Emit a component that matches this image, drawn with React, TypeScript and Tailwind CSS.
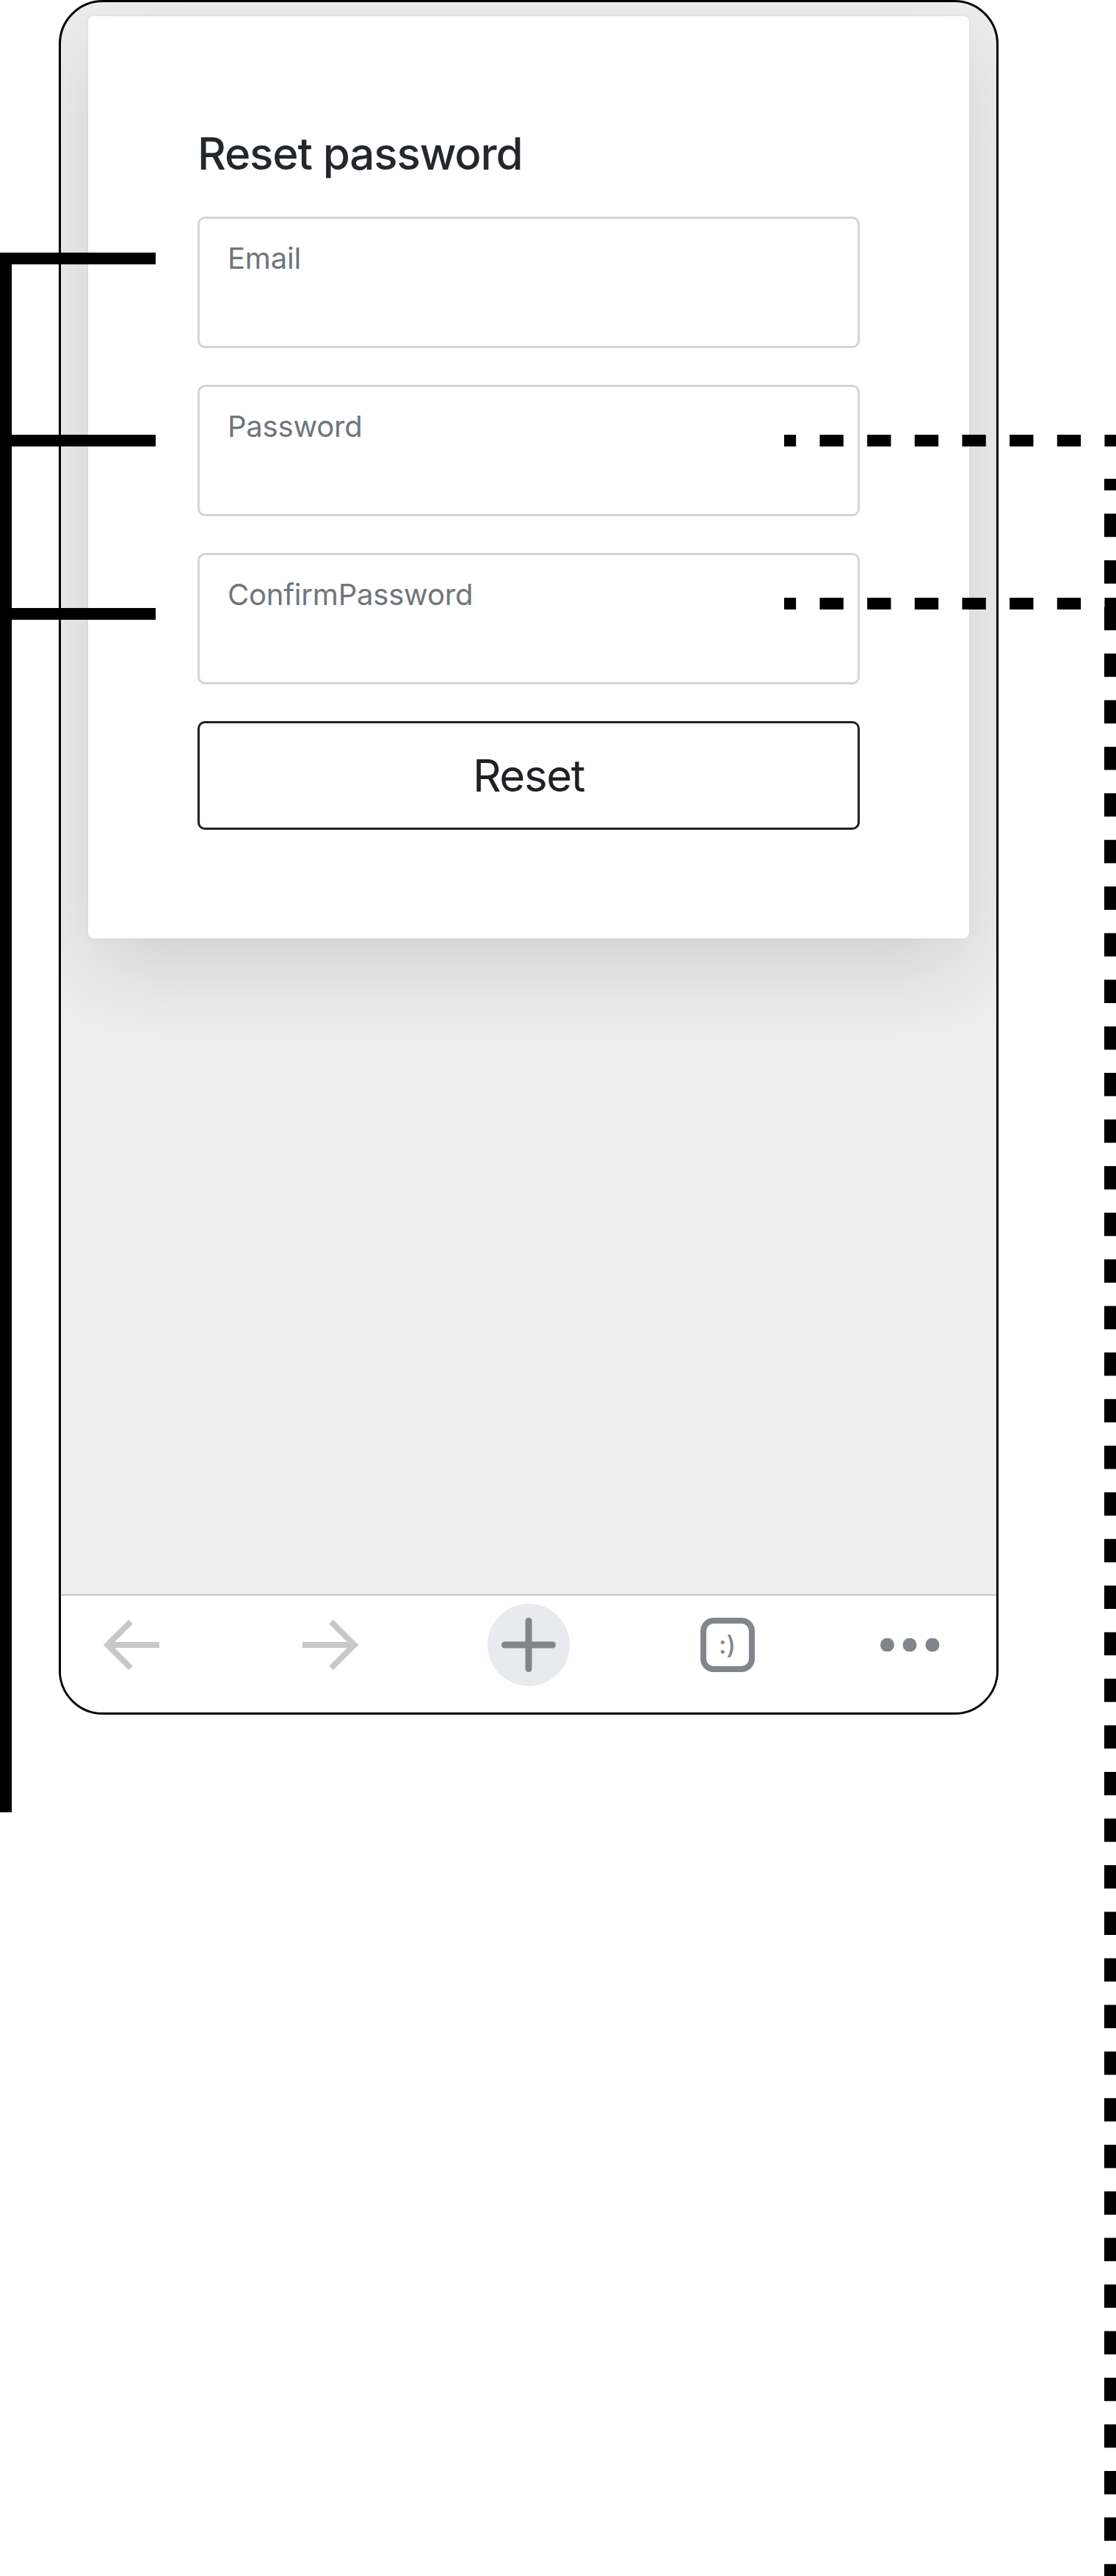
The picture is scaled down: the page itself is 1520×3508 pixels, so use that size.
import React from 'react';

const fields = ['Email', 'Password', 'ConfirmPassword'];

const ArrowIcon = ({ flip = false }: { flip?: boolean }) => (
  <svg width="76" height="70" viewBox="0 0 76 70" className={flip ? 'rotate-180' : ''} fill="none" stroke="#c8c8c8" strokeWidth="8">
    <path d="M76 35H6" />
    <path d="M37 3.5L5.5 35L37 66.5" strokeLinejoin="miter" />
  </svg>
);

const NavSlot = ({ children }: { children: React.ReactNode }) => (
  <div className="flex h-[112px] w-[112px] items-center justify-center">{children}</div>
);

// lines that run from the form fields off the edge of the picture
const Connectors = () => (
  <svg className="absolute left-0 top-0" width="1520" height="3508" viewBox="0 0 1520 3508" fill="none">
    <g fill="#000">
      <rect x="0" y="344" width="212" height="16" />
      <rect x="0" y="592" width="212" height="16" />
      <rect x="0" y="828" width="212" height="16" />
      <rect x="0" y="344" width="16" height="2124" />
    </g>
    <g stroke="#000" strokeWidth="16">
      <path d="M1068 600H1520" strokeDasharray="32.33 32.33" strokeDashoffset="16.17" />
      <path d="M1068 822H1520" strokeDasharray="32.33 32.33" strokeDashoffset="16.17" />
      <path d="M1512 652V3508" strokeDasharray="31.73 31.73" strokeDashoffset="15.87" />
    </g>
  </svg>
);

export default function App() {
  return (
    <div className="relative h-[3508px] w-[1520px] overflow-hidden bg-white font-['Inter',sans-serif]">
      <div className="ml-[80px] flex h-[2335px] w-[1280px] flex-col overflow-hidden rounded-[60px] border-[3px] border-black bg-[#eeeeee]">
        <div className="flex-1 px-[37px] pt-[19px]">
          {/* Card */}
          <div className="rounded-[8px] bg-white px-[149px] pb-[148px] pt-[151px] shadow-[0_40px_120px_rgba(0,0,0,0.13),0_0_4px_rgba(0,0,0,0.06)]">
            <h1 className="mb-[50px] text-[60px] leading-[72px] font-medium tracking-[-1.1px] text-[#24272b]">Reset password</h1>
            <div className="flex flex-col gap-[50px]">
              {fields.map((field) => (
                <div key={field} className="h-[179px] rounded-[10px] border-[3px] border-[#d1d5db] px-[38px] pt-[30px] text-[40px] leading-[48px] tracking-[-0.2px] text-[#70757a]">
                  {field}
                </div>
              ))}
              <button className="flex h-[148px] items-center justify-center rounded-[10px] border-[3px] border-[#202124] text-[60px] leading-[72px] tracking-[-1.4px] text-[#202124]">
                Reset
              </button>
            </div>
          </div>
        </div>

        {/* Bottom nav */}
        <div className="flex h-[161px] items-start justify-between border-t-2 border-[#c8c8c8] bg-white px-[40px] pt-[11px]">
          <NavSlot>
            <ArrowIcon />
          </NavSlot>
          <NavSlot>
            <ArrowIcon flip />
          </NavSlot>
          <div className="flex h-[112px] w-[112px] items-center justify-center rounded-full bg-[#e8eaed]">
            <svg width="74" height="74" viewBox="0 0 74 74" fill="#80868b">
              <rect x="32.5" y="0" width="9" height="74" rx="4.5" />
              <rect x="0" y="32.5" width="74" height="9" rx="4.5" />
            </svg>
          </div>
          <NavSlot>
            <div className="flex h-[74px] w-[74px] items-center justify-center rounded-[18px] border-[8px] border-[#80868b] text-[34px] leading-none font-medium text-[#80868b]">
              :)
            </div>
          </NavSlot>
          <NavSlot>
            <svg width="81" height="18" viewBox="0 0 81 18" fill="#80868b" className="mr-[43px] shrink-0">
              <circle cx="9.5" cy="9" r="9.5" />
              <circle cx="40" cy="9" r="9.5" />
              <circle cx="71" cy="9" r="9.5" />
            </svg>
          </NavSlot>
        </div>
      </div>
      <Connectors />
    </div>
  );
}
